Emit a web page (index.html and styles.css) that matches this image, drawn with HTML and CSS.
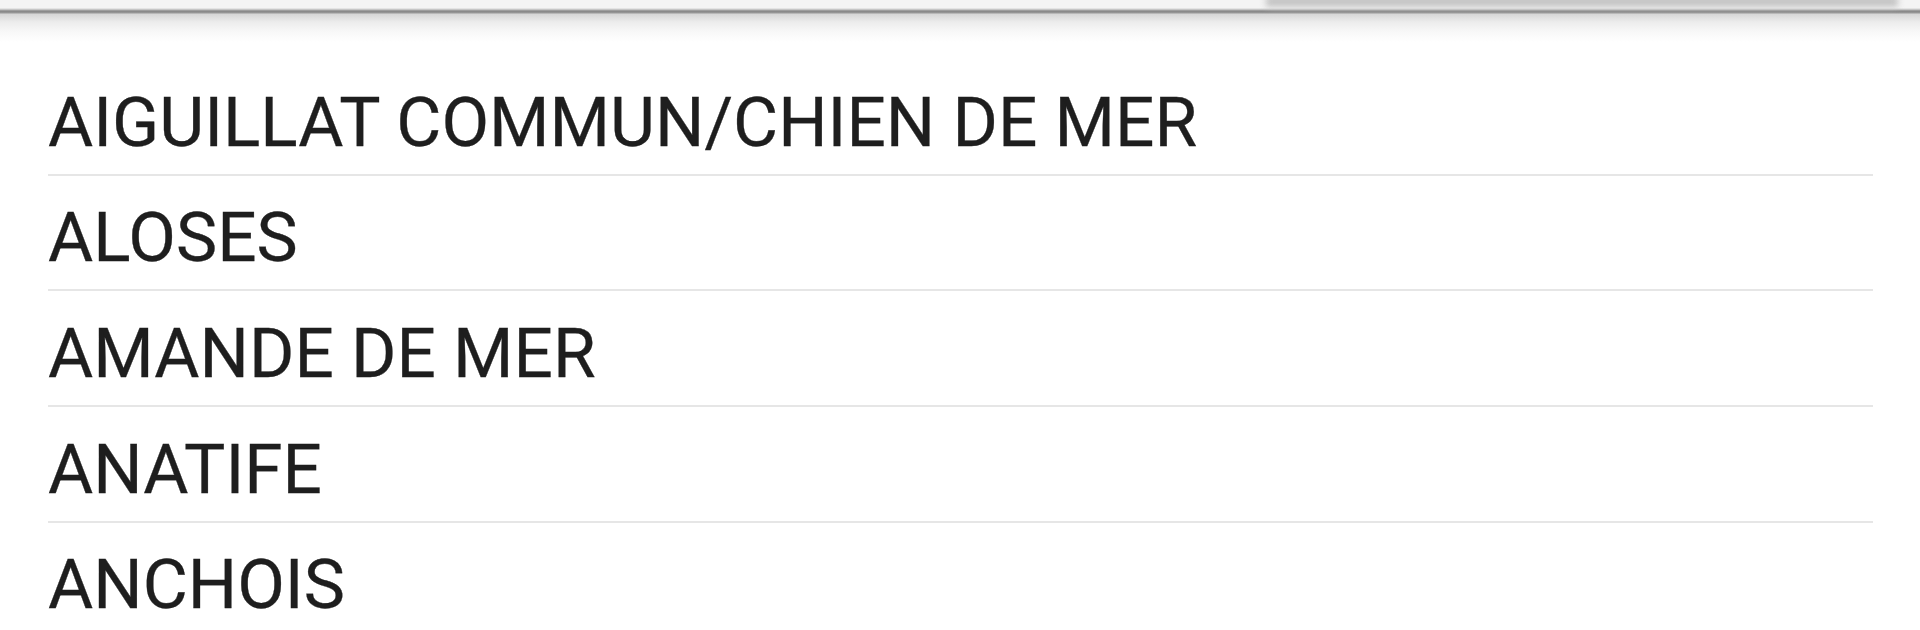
FILE: index.html
```html
<!DOCTYPE html>
<html lang="fr">
<head>
<meta charset="utf-8">
<title>Liste des espèces</title>
<link rel="stylesheet" href="styles.css">
</head>
<body>
<header class="appbar">
  <div class="appbar-shade"></div>
</header>
<ul class="species-list">
  <li class="species-item">AIGUILLAT COMMUN/CHIEN DE MER</li>
  <li class="species-item">ALOSES</li>
  <li class="species-item">AMANDE DE MER</li>
  <li class="species-item">ANATIFE</li>
  <li class="species-item">ANCHOIS</li>
</ul>
</body>
</html>
```
FILE: styles.css
```css
html, body {
  margin: 0;
  padding: 0;
  background: #ffffff;
  overflow: hidden;
  height: 630px;
}

body {
  font-family: Roboto, "Noto Sans", "Liberation Sans", sans-serif;
  color: #1e1e1e;
}

.appbar {
  position: relative;
  height: 42px;
  background: linear-gradient(to bottom,
    #f4f4f4 0px,
    #f4f4f4 8px,
    #e4e4e4 8px,
    #e4e4e4 9px,
    #a8a8a8 10px,
    #8a8a8a 11.5px,
    #9a9a9a 13px,
    #d6d6d6 14px,
    #ececec 22px,
    #f8f8f8 32px,
    #ffffff 42px);
}

.appbar-shade {
  position: absolute;
  left: 1266px;
  top: -4px;
  width: 632px;
  height: 11px;
  background: #c4c4c4;
  filter: blur(3px);
}

.species-list {
  list-style: none;
  margin: 18px 47px 0 48px;
  padding: 0;
}

.species-item {
  box-sizing: border-box;
  height: 115.7px;
  padding-top: 27.5px;
  font-size: 69.3px;
  line-height: 70px;
  border-bottom: 2px solid #e6e6e6;
  white-space: nowrap;
  -webkit-text-stroke: 0.3px #1e1e1e;
}
```
